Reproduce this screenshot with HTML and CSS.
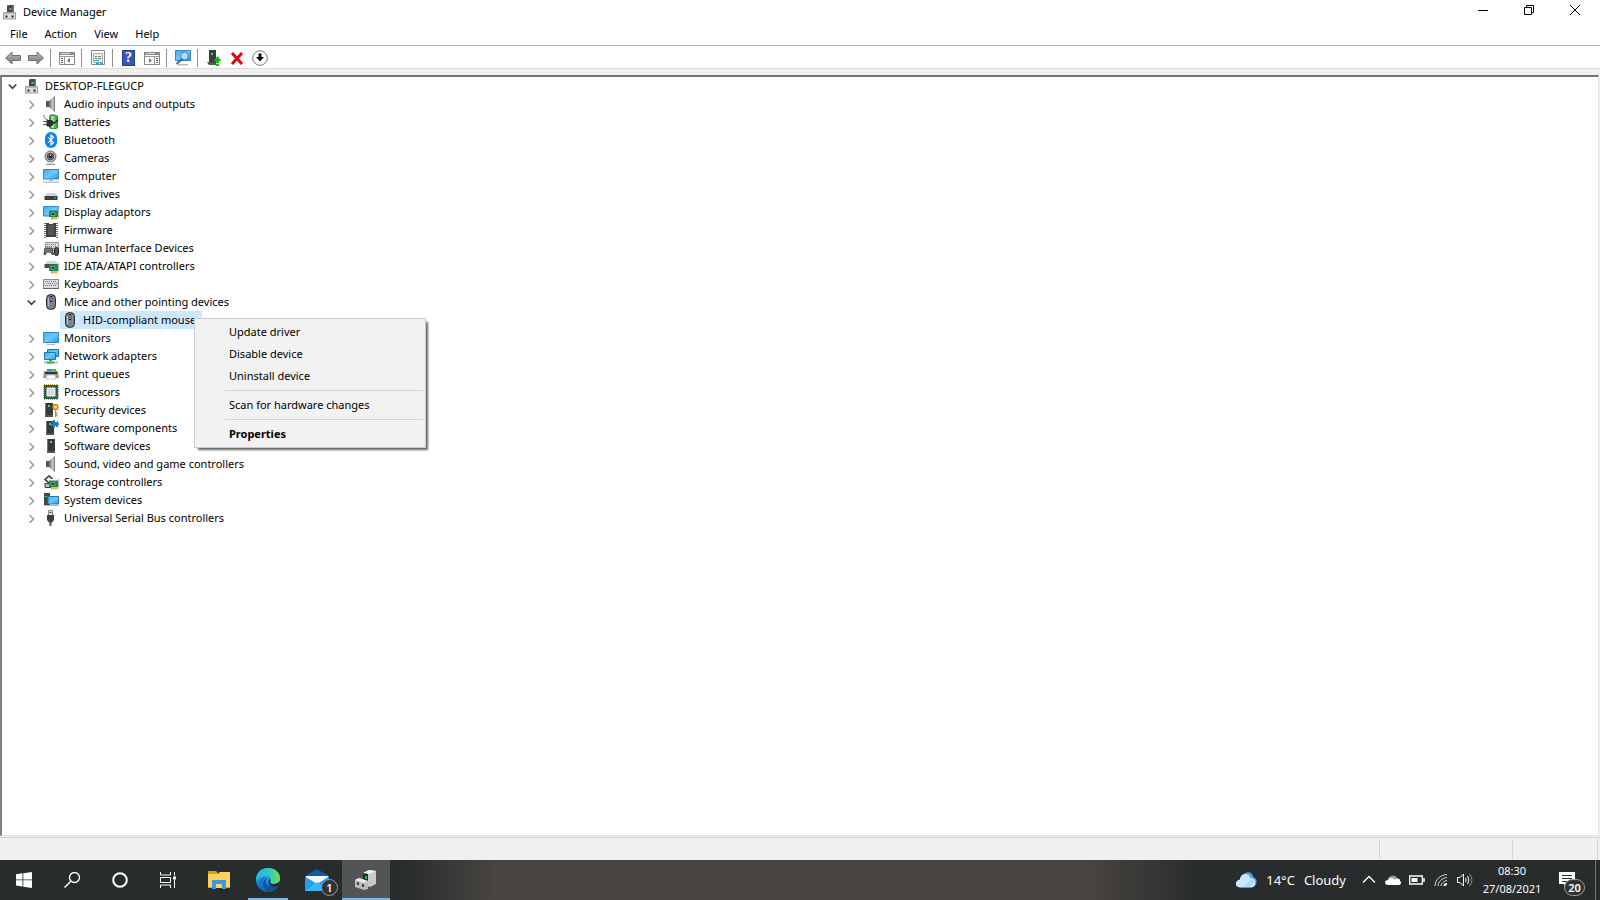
FILE: index.html
```
<!DOCTYPE html>
<html lang="en">
<head>
    <meta charset="UTF-8">
    <meta name="viewport" content="width=device-width, initial-scale=1.0">
    <title>Device Manager</title>
    <link rel="stylesheet" href="styles.css">
</head>
<body>
    <!-- icon set -->
    <svg class="sprite" aria-hidden="true">
        <defs>
            <linearGradient id="screenBlue" x1="0" y1="0" x2="1" y2="1">
                <stop offset="0" stop-color="#3fa9f5"/><stop offset=".5" stop-color="#6cc8ff"/><stop offset="1" stop-color="#2a97e8"/>
            </linearGradient>
            <linearGradient id="metal" x1="0" y1="0" x2="1" y2="0">
                <stop offset="0" stop-color="#666"/><stop offset="1" stop-color="#ddd"/>
            </linearGradient>
            <linearGradient id="arrowGrey" x1="0" y1="0" x2="0" y2="1">
                <stop offset="0" stop-color="#bbb"/><stop offset="1" stop-color="#777"/>
            </linearGradient>
            <linearGradient id="edgeBlue" x1="0" y1="0" x2="0" y2="1">
                <stop offset="0" stop-color="#35c1f1"/><stop offset=".6" stop-color="#1a8ad8"/><stop offset="1" stop-color="#0c59a4"/>
            </linearGradient>
            <linearGradient id="edgeGreen" x1="0" y1="0" x2="1" y2="0">
                <stop offset="0" stop-color="#25b5e8"/><stop offset=".5" stop-color="#2fc4c8"/><stop offset="1" stop-color="#6be25a"/>
            </linearGradient>
        </defs>
        <symbol id="chevron-right" viewBox="0 0 9 9"><path d="M2.500 1 6.500 5 2.500 9" fill="none" stroke="#a2a2a2" stroke-width="1.700"/></symbol>
        <symbol id="chevron-down" viewBox="0 0 9 9"><path d="M.7 2.500 4.500 6.300 8.300 2.500" fill="none" stroke="#404040" stroke-width="1.700"/></symbol>
        <symbol id="computer-root" viewBox="0 0 16 16">
            <path d="M5 1.500 7 1h5v8H5z" fill="#484848"/><path d="M10.500 1H12v8h-1.500z" fill="#777"/><path d="M7.500 4h2v2h-2z" fill="#4c6"/>
            <path d="M1.500 8.500h12V15h-12z" fill="#ddd" stroke="#999"/><path d="M1 8.500h13v1.500H1z" fill="#b5b5b5"/><path d="M3.500 11.500h2v2h-2zM9.500 11.500h2v2h-2z" fill="#222"/>
        </symbol>
        <symbol id="speaker" viewBox="0 0 16 16">
            <path d="M3 5h3v6H3z" fill="#555"/><path d="M6 5 10.500 1v14L6 11z" fill="url(#metal)"/><path d="M10.500 .5H12v15h-1.500z" fill="#808080"/>
        </symbol>
        <symbol id="battery" viewBox="0 0 16 16">
            <path d="M7 0h5v2H7z" fill="#aaa"/><rect x="6" y="1" width="9" height="14" rx="2" fill="#2f9b36"/><path d="M8 2h3v12H8z" fill="#9bdf8d"/><path d="M11 2h2v12h-2z" fill="#50bb4c"/>
            <path d="M1 1c0 4 2 4 4 5" fill="none" stroke="#555"/><path d="M4 6.500h3c3 0 3 1 3 2.500s-1 3-3 3H4z" fill="#333" stroke="#222"/><path d="M10 9c3 0 3-1 5-3" fill="none" stroke="#222" stroke-width="1.300"/><path d="M0 7.500h4M0 10.500h4" stroke="#555"/>
        </symbol>
        <symbol id="bluetooth" viewBox="0 0 16 16">
            <rect x="2" width="12" height="16" rx="6" fill="#0a84f5"/><path d="M5 5.200 10.500 10.700 8 13V3l2.500 2.300L5 10.800" fill="none" stroke="#fff" stroke-width="1.100"/>
        </symbol>
        <symbol id="camera" viewBox="0 0 16 16">
            <circle cx="7.500" cy="6.500" r="5.500" fill="#bbb" stroke="#666"/><circle cx="7.500" cy="6.500" r="3.300" fill="#777" stroke="#444"/><circle cx="7.500" cy="6.500" r="1.800" fill="#222"/><path d="M7 5h1v1H7z" fill="#ddd"/><path d="M5 12h5l2 2.500H3z" fill="#ddd"/><path d="M3 14.500h9" stroke="#999"/>
        </symbol>
        <symbol id="computer" viewBox="0 0 16 16">
            <path d="M.5 1.500h15v9.500H.5z" fill="url(#screenBlue)" stroke="#3188c5"/><path d="M6 11.500h4V13H6z" fill="#bbb"/><path d="M0 13.500h16v1.500H0z" fill="#b5c9d4"/>
        </symbol>
        <symbol id="disk" viewBox="0 0 16 16">
            <path d="M3.500 7h9l2 3h-13z" fill="#d5d5d5"/><path d="M1.500 10h13v4h-13z" fill="#3d3d3d"/><path d="M11 11.500h2v1h-2z" fill="#3ed35a"/>
        </symbol>
        <symbol id="card" viewBox="0 0 16 16">
            <path d="M6 6.500h10v6.500H6z" fill="#218454"/><path d="M8 8.500h4v3H8z" fill="#145a38" stroke="#6fbf90" stroke-width=".7"/><path d="M15 5h1v10h-1z" fill="#bbb"/><path d="M8 13h6v2.500H8z" fill="#e8a324"/><path d="M10 13v3M12 13v3" stroke="#fff" stroke-width=".5"/>
        </symbol>
        <symbol id="display" viewBox="0 0 16 16">
            <path d="M.5 2.500h15v9.500H.5z" fill="url(#screenBlue)" stroke="#3188c5"/><use href="#card"/>
        </symbol>
        <symbol id="firmware" viewBox="0 0 16 16">
            <path d="M3 1h3v1h4V1h3v14H3z" fill="#414141"/><path d="M5 3h6v10H5z" fill="#555"/><path d="M2 1v15M14 1v15" stroke="#444" stroke-width="1.500" stroke-dasharray="1 1"/>
        </symbol>
        <symbol id="hid" viewBox="0 0 16 16">
            <path d="M2.500 2.500h13v8h-13z" fill="#ddd" stroke="#999"/><path d="M4 4.500h10M4 6.500h10M4 8.500h10" stroke="#777" stroke-dasharray="1 1"/>
            <path d="M1 14.500 2 8h7l1.500 6.500H9L7.500 12h-4L2.500 14.500z" fill="#777" stroke="#444"/><path d="M2.500 9h2v2h-2z" fill="#2997e8"/><rect x="11.500" y="7.500" width="4" height="8" rx="2" fill="#555" stroke="#222"/>
        </symbol>
        <symbol id="ide" viewBox="0 0 16 16"><path d="M4 3h9l2 3H2z" fill="#d5d5d5"/><path d="M1.500 6h13v4h-13z" fill="#4a4a4a"/><use href="#card"/></symbol>
        <symbol id="keyboard" viewBox="0 0 16 16">
            <path d="M.5 3.500h15v9H.5z" fill="#ddd" stroke="#8a8a8a"/><path d="M2 5.500h12M3 7.500h11M2 9.500h12" stroke="#777" stroke-dasharray="1 1"/><path d="M0 12.500h16" stroke="#666"/>
        </symbol>
        <symbol id="mouse" viewBox="0 0 16 16">
            <rect x="3.500" y=".6" width="9" height="14.800" rx="4" fill="#7b8492" stroke="#25282d"/><path d="M5.500 4v8" stroke="#b8c0cc"/><path d="M8 2v6" stroke="#222" stroke-width="2.500"/><path d="M8 3v4" stroke="#ccc"/>
        </symbol>
        <symbol id="monitor" viewBox="0 0 16 16"><path d="M.5 2.500h15v10H.5z" fill="url(#screenBlue)" stroke="#3188c5"/><path d="M4 14.500h8" stroke="#a5bccb"/></symbol>
        <symbol id="network" viewBox="0 0 16 16">
            <path d="M4.500 1.500h11v7h-11z" fill="url(#screenBlue)" stroke="#1c76b6"/><path d="M1.500 4.500h11v7h-11z" fill="url(#screenBlue)" stroke="#1c76b6"/><path d="M6 12h3v1.500H6z" fill="#35a853"/><path d="M1 14.500h14" stroke="#bbb" stroke-width="2"/><path d="M4 14.500h7" stroke="#35b853" stroke-width="2"/>
        </symbol>
        <symbol id="printer" viewBox="0 0 16 16">
            <path d="M4 3h9v3H4z" fill="#1f93df"/><path d="M9 3h3v2H9z" fill="#46c66a"/><path d="M1 5h14l1 7H0z" fill="#999"/><path d="M2 6h12v2H2z" fill="#333"/><path d="M4 9h8l1 4H3z" fill="#fff" stroke="#aaa" stroke-width=".6"/>
        </symbol>
        <symbol id="cpu" viewBox="0 0 16 16">
            <path d="M1 .5h14M1 15.500h14M.5 1v14M15.500 1v14" stroke="#c19d45" stroke-dasharray="1 1"/><path d="M1 1h14v14H1z" fill="#2f6049"/><path d="M4 4h8v8H4z" fill="#d9d9d9" stroke="#f3f3f3"/>
        </symbol>
        <symbol id="tower" viewBox="0 0 16 16"><path d="M4 1h8v14H4z" fill="#383838"/><path d="M4 1h1v12H4z" fill="#777"/><path d="M7 3h2v2H7z" fill="#3ee75a"/><path d="M4 13h8v2H4z" fill="#555"/></symbol>
        <symbol id="security" viewBox="0 0 16 16">
            <use href="#tower" x="-2"/><circle cx="12.500" cy="5" r="2.500" fill="#f7d180" stroke="#d18a1c" stroke-width="1.400"/><path d="M12.500 8v7M12.500 11.500h2M12.500 13.500h2" stroke="#d18a1c" stroke-width="1.400"/>
        </symbol>
        <symbol id="component" viewBox="0 0 16 16"><use href="#tower" x="-1"/><path d="M10 0h2v2h2V1h1v2h1v2h-1v2h-2V6h-1v2h-2V6H8V4h2V3H8V2h2z" fill="#237fc4"/></symbol>
        <symbol id="storage" viewBox="0 0 16 16"><path d="M2 5.500 6 2l4 3.500L6 9z" fill="#eee" stroke="#333" stroke-width="1.500"/><path d="M7 5h4v3H7z" fill="#fff"/><path d="M2 9.500h11v4H2z" fill="#bbb" stroke="#444"/><use href="#card"/></symbol>
        <symbol id="system" viewBox="0 0 16 16"><path d="M1 1h6v12H1z" fill="#454545"/><path d="M2 4h2v1H2z" fill="#3ee75a"/><path d="M5 4.500h10.500V12H5z" fill="url(#screenBlue)" stroke="#247aad"/><path d="M1 13.500h15" stroke="#a9bbc7"/></symbol>
        <symbol id="usb" viewBox="0 0 16 16"><path d="M5.500.5h4v5h-4z" fill="#ddd" stroke="#888"/><path d="M6.500 2h2v1h-2z" fill="#444"/><path d="M4 5h7v5l-2 2.500H6L4 10z" fill="#3f3f3f"/><path d="M7.500 12v4" stroke="#555" stroke-width="2"/></symbol>
    </svg>

    <div class="window">
        <header class="titlebar">
            <svg class="icon"><use href="#computer-root"/></svg>
            <h1>Device Manager</h1>
            <div class="window-buttons">
                <button type="button" aria-label="Minimise"><svg viewBox="0 0 10 10"><path d="M0 5.500h10"/></svg></button>
                <button type="button" aria-label="Restore"><svg viewBox="0 0 10 10"><path d="M.5 2.500h7v7h-7zM2.500 2.500v-2h7v7h-2"/></svg></button>
                <button type="button" aria-label="Close"><svg viewBox="0 0 10 10"><path d="M0 0l10 10M10 0 0 10"/></svg></button>
            </div>
        </header>

        <nav class="menubar">
            <button type="button">File</button>
            <button type="button">Action</button>
            <button type="button">View</button>
            <button type="button">Help</button>
        </nav>

        <div class="toolbar">
            <button type="button" aria-label="Back"><svg viewBox="0 0 16 16"><path d="M.5 8 7 2v3.500h8.500v5H7V14z" fill="url(#arrowGrey)" stroke="#707070"/></svg></button>
            <button type="button" aria-label="Forward"><svg viewBox="0 0 16 16"><path d="M15.500 8 9 2v3.500H.5v5H9V14z" fill="url(#arrowGrey)" stroke="#707070"/></svg></button>
            <span class="divider"></span>
            <button type="button" aria-label="Show console tree"><svg viewBox="0 0 16 16"><path d="M.5 2.500h15v12H.5z" fill="#fff" stroke="#888"/><path d="M0 3.500h16" stroke="#888" stroke-width="3"/><path d="M2 3.500h9" stroke="#ddd"/><path d="M5.500 6v8M1 6.500h14" stroke="#999"/><path d="M2 8.500h2M2 10.500h2M2 12.500h2" stroke="#555"/><path d="M11 8v5L8 10.500z" fill="#2eaa25"/></svg></button>
            <span class="divider"></span>
            <button type="button" aria-label="Properties"><svg viewBox="0 0 16 16"><path d="M1.500.5h13v14h-13z" fill="#fff" stroke="#888"/><path d="M3.500 3.500h9v9h-9z" fill="#f3f3f3" stroke="#aaa"/><path d="M5 6.500h2M5 8.500h2M8 6.500h3M8 8.500h3" stroke="#777"/><path d="M6 13.500h3M10 13.500h3" stroke="#2ca1d9" stroke-width="2"/><path d="M4 10.500h5" stroke="#2ca1d9"/></svg></button>
            <span class="divider"></span>
            <button type="button" class="help-button" aria-label="Help"><span>?</span></button>
            <button type="button" aria-label="Show action pane"><svg viewBox="0 0 16 16"><path d="M.5 2.500h15v12H.5z" fill="#fff" stroke="#888"/><path d="M0 3.500h16" stroke="#888" stroke-width="3"/><path d="M2 3.500h9" stroke="#ddd"/><path d="M10.500 6v8M1 6.500h14" stroke="#999"/><path d="M12 8.500h2M12 10.500h2M12 12.500h2" stroke="#555"/><path d="M5 8v5l3-2.500z" fill="#2eaa25"/></svg></button>
            <span class="divider"></span>
            <button type="button" aria-label="Scan for hardware changes"><svg viewBox="0 0 16 16"><path d="M.5.500h15v10H.5z" fill="url(#screenBlue)" stroke="#3188c5"/><path d="M3 14h10v1.500H3z" fill="#aabfca"/><circle cx="9.500" cy="6" r="4" fill="#a8dcf8" stroke="#578"/><path d="M7 9 1.500 14" stroke="#567" stroke-width="2"/></svg></button>
            <span class="divider"></span>
            <button type="button" aria-label="Update driver"><svg viewBox="0 0 16 16"><path d="M3 0h7v13H3z" fill="#3c3c3c"/><path d="M5 3h2v2H5z" fill="#3ee75a"/><path d="M1 12h9v3H3z" fill="#555"/><path d="M11.500 6 15.500 11h-2.500v2h-3v-2H7.500z" fill="#16b51d"/><path d="M10 15h3" stroke="#16b51d" stroke-width="2"/></svg></button>
            <button type="button" aria-label="Uninstall device"><svg viewBox="0 0 16 16"><path d="M3 3l10 11M13 3 3 14" stroke="#dc0914" stroke-width="3"/></svg></button>
            <button type="button" aria-label="Disable device"><svg viewBox="0 0 16 16"><circle cx="8" cy="8" r="7.300" fill="#fff" stroke="#777"/><path d="M6.500 3.500h3V7H12l-4 4.500L4 7h2.500z" fill="#111"/></svg></button>
        </div>

        <main class="tree-panel">
            <ul class="tree">
                <li>
                    <div class="row"><button type="button" class="toggle" aria-label="Collapse"><svg><use href="#chevron-down"/></svg></button><span class="node"><svg class="icon"><use href="#computer-root"/></svg>DESKTOP-FLEGUCP</span></div>
                    <ul>
                        <li class="row"><button type="button" class="toggle" aria-label="Expand"><svg><use href="#chevron-right"/></svg></button><span class="node"><svg class="icon"><use href="#speaker"/></svg>Audio inputs and outputs</span></li>
                        <li class="row"><button type="button" class="toggle" aria-label="Expand"><svg><use href="#chevron-right"/></svg></button><span class="node"><svg class="icon"><use href="#battery"/></svg>Batteries</span></li>
                        <li class="row"><button type="button" class="toggle" aria-label="Expand"><svg><use href="#chevron-right"/></svg></button><span class="node"><svg class="icon"><use href="#bluetooth"/></svg>Bluetooth</span></li>
                        <li class="row"><button type="button" class="toggle" aria-label="Expand"><svg><use href="#chevron-right"/></svg></button><span class="node"><svg class="icon"><use href="#camera"/></svg>Cameras</span></li>
                        <li class="row"><button type="button" class="toggle" aria-label="Expand"><svg><use href="#chevron-right"/></svg></button><span class="node"><svg class="icon"><use href="#computer"/></svg>Computer</span></li>
                        <li class="row"><button type="button" class="toggle" aria-label="Expand"><svg><use href="#chevron-right"/></svg></button><span class="node"><svg class="icon"><use href="#disk"/></svg>Disk drives</span></li>
                        <li class="row"><button type="button" class="toggle" aria-label="Expand"><svg><use href="#chevron-right"/></svg></button><span class="node"><svg class="icon"><use href="#display"/></svg>Display adaptors</span></li>
                        <li class="row"><button type="button" class="toggle" aria-label="Expand"><svg><use href="#chevron-right"/></svg></button><span class="node"><svg class="icon"><use href="#firmware"/></svg>Firmware</span></li>
                        <li class="row"><button type="button" class="toggle" aria-label="Expand"><svg><use href="#chevron-right"/></svg></button><span class="node"><svg class="icon"><use href="#hid"/></svg>Human Interface Devices</span></li>
                        <li class="row"><button type="button" class="toggle" aria-label="Expand"><svg><use href="#chevron-right"/></svg></button><span class="node"><svg class="icon"><use href="#ide"/></svg>IDE ATA/ATAPI controllers</span></li>
                        <li class="row"><button type="button" class="toggle" aria-label="Expand"><svg><use href="#chevron-right"/></svg></button><span class="node"><svg class="icon"><use href="#keyboard"/></svg>Keyboards</span></li>
                        <li>
                            <div class="row"><button type="button" class="toggle" aria-label="Collapse"><svg><use href="#chevron-down"/></svg></button><span class="node"><svg class="icon"><use href="#mouse"/></svg>Mice and other pointing devices</span></div>
                            <ul>
                                <li class="row leaf">
                                    <span class="node selected"><svg class="icon"><use href="#mouse"/></svg>HID-compliant mouse</span>
                                    <div class="context-menu">
                                        <button type="button">Update driver</button>
                                        <button type="button">Disable device</button>
                                        <button type="button">Uninstall device</button>
                                        <hr>
                                        <button type="button">Scan for hardware changes</button>
                                        <hr>
                                        <button type="button" class="default">Properties</button>
                                    </div>
                                </li>
                            </ul>
                        </li>
                        <li class="row"><button type="button" class="toggle" aria-label="Expand"><svg><use href="#chevron-right"/></svg></button><span class="node"><svg class="icon"><use href="#monitor"/></svg>Monitors</span></li>
                        <li class="row"><button type="button" class="toggle" aria-label="Expand"><svg><use href="#chevron-right"/></svg></button><span class="node"><svg class="icon"><use href="#network"/></svg>Network adapters</span></li>
                        <li class="row"><button type="button" class="toggle" aria-label="Expand"><svg><use href="#chevron-right"/></svg></button><span class="node"><svg class="icon"><use href="#printer"/></svg>Print queues</span></li>
                        <li class="row"><button type="button" class="toggle" aria-label="Expand"><svg><use href="#chevron-right"/></svg></button><span class="node"><svg class="icon"><use href="#cpu"/></svg>Processors</span></li>
                        <li class="row"><button type="button" class="toggle" aria-label="Expand"><svg><use href="#chevron-right"/></svg></button><span class="node"><svg class="icon"><use href="#security"/></svg>Security devices</span></li>
                        <li class="row"><button type="button" class="toggle" aria-label="Expand"><svg><use href="#chevron-right"/></svg></button><span class="node"><svg class="icon"><use href="#component"/></svg>Software components</span></li>
                        <li class="row"><button type="button" class="toggle" aria-label="Expand"><svg><use href="#chevron-right"/></svg></button><span class="node"><svg class="icon"><use href="#tower"/></svg>Software devices</span></li>
                        <li class="row"><button type="button" class="toggle" aria-label="Expand"><svg><use href="#chevron-right"/></svg></button><span class="node"><svg class="icon"><use href="#speaker"/></svg>Sound, video and game controllers</span></li>
                        <li class="row"><button type="button" class="toggle" aria-label="Expand"><svg><use href="#chevron-right"/></svg></button><span class="node"><svg class="icon"><use href="#storage"/></svg>Storage controllers</span></li>
                        <li class="row"><button type="button" class="toggle" aria-label="Expand"><svg><use href="#chevron-right"/></svg></button><span class="node"><svg class="icon"><use href="#system"/></svg>System devices</span></li>
                        <li class="row"><button type="button" class="toggle" aria-label="Expand"><svg><use href="#chevron-right"/></svg></button><span class="node"><svg class="icon"><use href="#usb"/></svg>Universal Serial Bus controllers</span></li>
                    </ul>
                </li>
            </ul>
        </main>

        <div class="statusbar"><span></span><span></span><span></span></div>
    </div>

    <footer class="taskbar">
        <div class="shell-buttons">
            <button type="button" aria-label="Start"><svg class="glyph" viewBox="0 0 16 16"><path d="M0 2.300 6.500 1.300V7.500H0zM7.300 1.200 16 0v7.500H7.300zM0 8.300h6.500v6.200L0 13.600zM7.300 8.300H16V16l-8.700-1.300z" fill="#fff"/></svg></button>
            <button type="button" aria-label="Search"><svg class="glyph" viewBox="0 0 16 16"><circle cx="10.500" cy="5.500" r="5" fill="none" stroke="#fff" stroke-width="1.300"/><path d="M7 9 .5 15.500" stroke="#fff" stroke-width="1.500"/></svg></button>
            <button type="button" aria-label="Cortana"><svg class="glyph" viewBox="0 0 16 16"><circle cx="8" cy="8" r="6.800" fill="none" stroke="#fff" stroke-width="2"/></svg></button>
            <button type="button" aria-label="Task view"><svg class="glyph" viewBox="0 0 16 16"><path d="M.5 0v3h10V0M.5 16v-3h10v3M.5 5.500h10v5H.5zM14.500 0v3.500M14.500 7.500V16" fill="none" stroke="#fff"/><path d="M13 4.500h3v3h-3z" fill="#fff"/></svg></button>
        </div>
        <div class="apps">
            <button type="button" aria-label="File Explorer"><svg class="app-icon" viewBox="0 0 24 24"><path d="M1 3h8l2 2v3H1z" fill="#e19b0c"/><path d="M1 6h10l2-2h10v16H1z" fill="#ffd25e"/><path d="M5 12h14v9h-4v-5H9v5H5z" fill="#3d99df"/><path d="M1 19h4v1H1zM19 19h4v1h-4z" fill="#d7a02d"/></svg></button>
            <button type="button" class="open" aria-label="Microsoft Edge"><svg class="app-icon" viewBox="0 0 24 24"><circle cx="12" cy="12" r="12" fill="url(#edgeBlue)"/><path d="M.2 10C1 4 6 0 12 0c7 0 12 4.500 12 10 0 4-3 6-6 6-3.500 0-4.500-1.300-3.500-2.500C16 11 14 8 10 8 5 8 1.500 10 0 13z" fill="url(#edgeGreen)"/><path d="M10 9c-4 2-5 10 2 14-6 0-9-4-9-8 0-3 3-6 7-6z" fill="#1277c9"/><path d="M12 9c-5 4-3 12 10 9-2 4-6 6-10 6-6-3-7-12 0-15z" fill="#0d529c"/><path d="M14.500 13.500c-1 1.200 0 2.500 3.500 2.500 2 0 4-1 6-3l-1.500 5c-7 3-12-2-9-7z" fill="#282c2d"/></svg></button>
            <button type="button" aria-label="Mail"><svg class="app-icon" viewBox="0 0 24 24"><path d="M0 8 12 1l12 7v15H0z" fill="#0f5ba8"/><path d="M1 8h22v6l-11 5L1 14z" fill="#f4f4f4"/><path d="M0 8.500 12 16l12-7.500V23H0z" fill="#219cec"/><path d="M0 23 12 14l12 9z" fill="#35b8fa"/></svg><span class="badge mail-badge">1</span></button>
            <button type="button" class="open active" aria-label="Device Manager"><svg class="app-icon" viewBox="0 0 24 24"><path d="M9 5 15 2l7 1v13l-6 3-7-2z" fill="#c9c9c9"/><path d="M9 5 15 2l7 1-6 3z" fill="#eee"/><path d="M9 5l5 1v11l-5-1z" fill="#292929"/><path d="M11 8h2v3h-2z" fill="#2eaf4b"/><path d="M1 12l4-2 9 3v8l-4 1-9-3z" fill="#bbb"/><path d="M1 12l4-2 9 3-4 2z" fill="#e8e8e8"/><path d="M3 14h2v3H3zM8 16h2v3H8z" fill="#444"/></svg></button>
        </div>
        <div class="tray">
            <button type="button" class="weather"><svg viewBox="0 0 22 16"><path d="M8 4c1-5 10-5 10 1 5 1 5 9-1 10H8z" fill="#4b9ee6"/><path d="M5 15.500C-1 15 0 8 5 7.500 5 1 14 0 15.500 6c6-1 6.500 9 1 9.500z" fill="#c9e8fd"/><path d="M8 15 17 7l3 3-6 5z" fill="#a7d7fa"/></svg><span>14°C</span><span>Cloudy</span></button>
            <button type="button" aria-label="Show hidden icons"><svg viewBox="0 0 16 16"><path d="M2 10.500 8 4.500l6 6" fill="none" stroke="#fff" stroke-width="1.300"/></svg></button>
            <button type="button" aria-label="OneDrive"><svg viewBox="0 0 16 16"><path d="M3 8c0-5 8-6 9-2l2 3z" fill="#999"/><path d="M3 13c-4 0-4-5 0-5 2-3 6-2 7 0 1-3 6-1 5 1 2 1 1 4-1 4z" fill="#fff"/></svg></button>
            <button type="button" aria-label="Battery"><svg viewBox="0 0 16 16"><path d="M.7 4h12.600v8H.7z" fill="none" stroke="#fff" stroke-width="1.300"/><path d="M2.500 6h6v4h-6z" fill="#fff"/><path d="M15 6v4" stroke="#fff" stroke-width="1.500"/></svg></button>
            <button type="button" aria-label="Wi-Fi"><svg viewBox="0 0 16 16"><path d="M2 14C2 8 7 3 14 2.500M5 14C5 10 9 6 14 5.500M8 14c0-2.500 3-5 6-5.500" fill="none" stroke="#ddd"/><path d="M11.500 14c0-1 1-2 2.500-2" fill="none" stroke="#fff" stroke-width="2"/></svg></button>
            <button type="button" aria-label="Volume"><svg viewBox="0 0 16 16"><path d="M.5 5.500H3L6.500 2v12L3 10.500H.5z" fill="none" stroke="#fff"/><path d="M8.500 6q1.500 2 0 4M10.500 4q3 4 0 8" fill="none" stroke="#fff"/><path d="M12.500 2q5 6 0 12" fill="none" stroke="#888"/></svg></button>
            <button type="button" class="clock"><span>08:30</span><span>27/08/2021</span></button>
            <button type="button" class="notifications" aria-label="Notifications"><svg viewBox="0 0 16 16"><path d="M0 0h16v12H9l-4 4v-4H0z" fill="#fff"/><path d="M3 3.500h10M3 6.500h10M3 9.500h7" stroke="#292d2e"/></svg><span class="badge count-badge">20</span></button>
            <button type="button" class="show-desktop" aria-label="Show desktop"></button>
        </div>
    </footer>
</body>
</html>
```

FILE: styles.css
```
* {
    box-sizing: border-box;
}

body {
    font-family: "Noto Sans", "Open Sans", sans-serif;
    font-size: 11px;
    line-height: 18px;
    color: #000;
    margin: 0;
    height: 100vh;
    display: flex;
    flex-direction: column;
    overflow: hidden;
}

button {
    font: inherit;
    color: inherit;
    background: none;
    border: none;
    padding: 0;
    margin: 0;
}

svg {
    display: block;
    flex: none;
}

.sprite {
    position: absolute;
    width: 0;
    height: 0;
}

.icon {
    width: 16px;
    height: 16px;
}

.window {
    flex: 1;
    min-height: 0;
    display: flex;
    flex-direction: column;
    background-color: #f0f0f0;
}

/* title bar and menus */
.titlebar {
    display: flex;
    align-items: center;
    height: 23px;
    padding-left: 2px;
    background-color: #fff;
}

.titlebar h1 {
    font-size: 11px;
    font-weight: normal;
    margin: 0 auto 0 5px;
}

.window-buttons {
    display: flex;
    align-self: flex-start;
    padding-right: 2px;
}

.window-buttons button {
    width: 46px;
    height: 20px;
    display: flex;
    justify-content: center;
    align-items: center;
}

.window-buttons svg {
    width: 10px;
    height: 10px;
    fill: none;
    stroke: #000;
}

.menubar {
    display: flex;
    gap: 17px;
    height: 23px;
    padding-left: 10px;
    background-color: #fff;
    border-bottom: 1px solid #b0b0b5;
}

.toolbar {
    display: flex;
    align-items: center;
    height: 23px;
    padding: 2px 0 0 1px;
    background-color: #fff;
    border-bottom: 1px solid #dcdcdc;
}

.toolbar button {
    width: 23px;
    height: 20px;
    display: flex;
    justify-content: center;
    align-items: center;
}

.toolbar svg {
    width: 16px;
    height: 16px;
}

.divider {
    width: 1px;
    height: 18px;
    margin: 0 4px 0 3px;
    background-color: #909090;
}

.help-button span {
    width: 13px;
    height: 16px;
    background-color: #3457b7;
    border: 1px solid #233f8f;
    color: #fff;
    font-family: "Liberation Serif", serif;
    font-size: 14px;
    font-weight: bold;
    line-height: 14px;
}

/* device tree */
.tree-panel {
    flex: 1;
    min-height: 0;
    margin: 6px 1px 1px 0;
    padding-left: 1px;
    background-color: #fff;
    border: 2px solid #696969;
    border-top-color: #737373;
    border-left-color: #808080;
    border-right: 1px solid #e3e3e3;
    border-bottom: 1px solid #e3e3e3;
}

.tree,
.tree ul {
    list-style: none;
    margin: 0;
    padding: 0;
}

.tree ul {
    padding-left: 19px;
}

.row {
    display: flex;
    height: 18px;
}

.toggle {
    width: 19px;
    display: flex;
    justify-content: center;
    align-items: center;
}

.toggle svg {
    width: 9px;
    height: 9px;
    overflow: visible;
}

.node {
    display: flex;
    align-items: center;
    gap: 5px;
    padding: 0 2px;
    white-space: nowrap;
}

.leaf {
    position: relative;
    padding-left: 19px;
}

.selected {
    padding-right: 6px;
    background-color: #cce8ff;
}

.context-menu {
    position: absolute;
    top: 7px;
    left: 153px;
    z-index: 1;
    width: 232px;
    padding: 2px;
    background-color: #f2f2f2;
    border: 1px solid #ccc;
    box-shadow: 3px 3px 2px -1px rgba(0, 0, 0, 0.6);
}

.context-menu button {
    display: block;
    width: 100%;
    height: 22px;
    padding-left: 32px;
    text-align: left;
}

.context-menu .default {
    font-weight: bold;
}

.context-menu hr {
    height: 1px;
    margin: 3px 0 3px 28px;
    border: none;
    background-color: #d3d3d3;
}

.statusbar {
    display: flex;
    justify-content: flex-end;
    height: 23px;
    padding: 1px 2px 1px 0;
    border-top: 1px solid #d4d4d4;
}

.statusbar span {
    width: 133px;
    border-right: 1px solid #d4d4d4;
}

.statusbar span:last-child {
    width: 85px;
}

/* taskbar */
.taskbar {
    display: flex;
    height: 40px;
    color: #fff;
    background: linear-gradient(to right, #282c2d 25%, #484440 31%, #484440 68%, #282c2d 75%);
}

.shell-buttons,
.apps,
.tray {
    display: flex;
}

.shell-buttons button,
.apps button {
    position: relative;
    width: 48px;
    display: flex;
    justify-content: center;
    align-items: center;
}

.apps {
    gap: 1px;
    margin-left: 3px;
}

.glyph {
    width: 16px;
    height: 16px;
}

.app-icon {
    width: 24px;
    height: 24px;
}

.open::after {
    content: "";
    position: absolute;
    left: 4px;
    right: 4px;
    bottom: 0;
    height: 2px;
    background-color: #76b9ed;
}

.active {
    background-color: #525456;
}

.active::after {
    left: 0;
    right: 0;
}

.badge {
    position: absolute;
    top: 19px;
    height: 17px;
    border: 1px solid #999;
    border-radius: 9px;
    background-color: #303435;
    font-size: 11px;
    font-weight: 600;
    line-height: 15px;
    text-align: center;
}

.mail-badge {
    left: 28px;
    width: 17px;
}

.tray {
    margin-left: auto;
}

.tray button {
    width: 24px;
    display: flex;
    justify-content: center;
    align-items: center;
}

.tray svg {
    width: 16px;
    height: 16px;
}

.tray .weather {
    width: auto;
    gap: 9px;
    margin-right: 11px;
    font-size: 13px;
}

.tray .weather svg {
    width: 22px;
}

.tray .clock {
    width: 70px;
    flex-direction: column;
}

.tray .notifications {
    position: relative;
    width: 40px;
}

.count-badge {
    left: 17px;
    width: 21px;
}

.tray .show-desktop {
    width: 5px;
    margin-left: 8px;
    border-left: 1px solid #777;
}
```
